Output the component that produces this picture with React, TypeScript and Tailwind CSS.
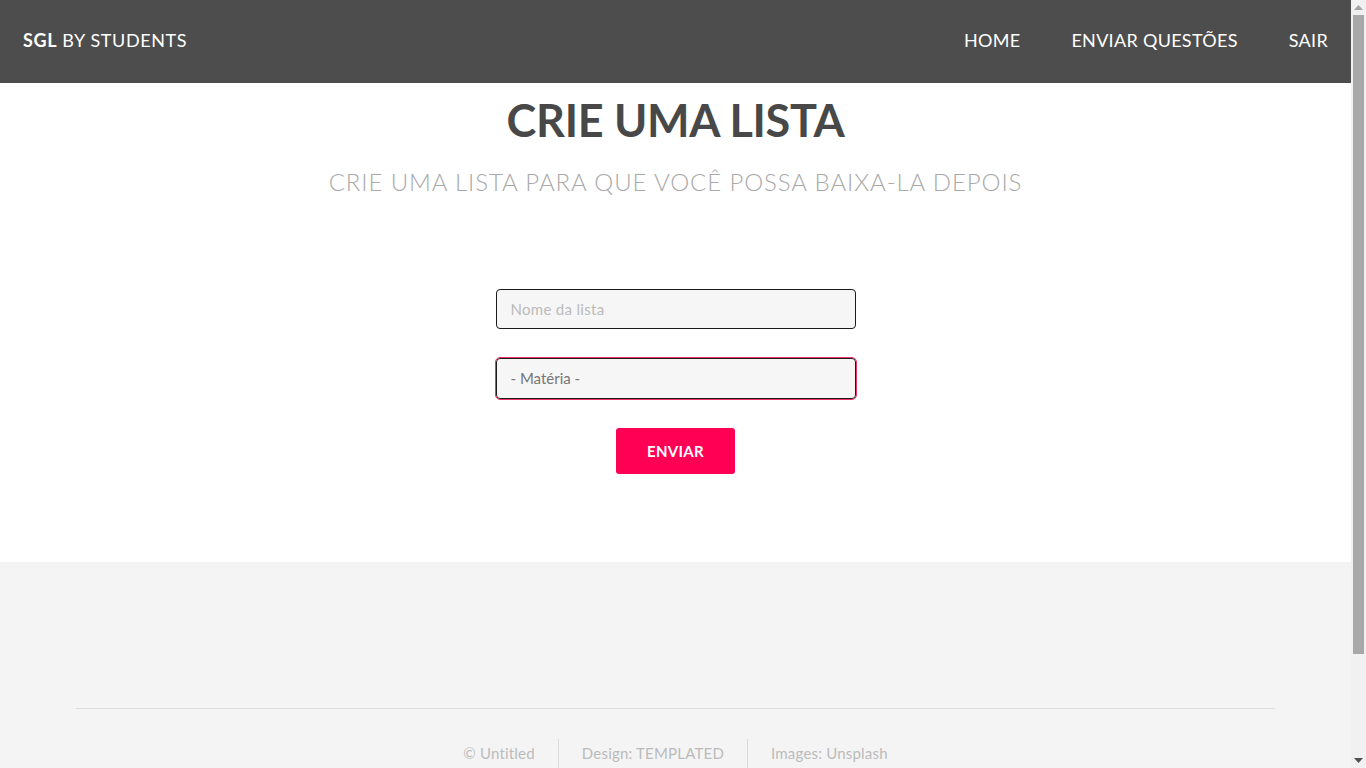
const navLinks = ["HOME", "ENVIAR QUESTÕES", "SAIR"];

// static picture of the browser scrollbar seen in the screenshot
const ScrollbarStrip = () => (
  <div className="w-[15px] shrink-0 bg-[#f1f1f1] flex flex-col items-center">
    <div className="h-[15px] flex items-center justify-center">
      <svg width="9" height="5" viewBox="0 0 9 5">
        <path d="M0 5 L4.5 0 L9 5 Z" fill="#a3a3a3" />
      </svg>
    </div>
    <div className="w-[11px] h-[639px] bg-[#a8a8a8]"></div>
    <div className="flex-1"></div>
    <div className="h-[15px] flex items-center justify-center">
      <svg width="9" height="5" viewBox="0 0 9 5">
        <path d="M0 0 L9 0 L4.5 5 Z" fill="#505050" />
      </svg>
    </div>
  </div>
);

const App = () => {
  return (
    <div
      className="h-[768px] flex overflow-hidden text-[#555]"
      style={{ fontFamily: "Lato, 'Open Sans', sans-serif" }}
    >
      <div className="flex-1 min-h-[887px] bg-[#f4f4f4]">
        <header className="h-[83px] bg-[#4d4d4d] flex items-center justify-between px-[23px] pb-[3px] text-white text-[18px] tracking-[0.3px]">
          <div className="tracking-[0.6px]">
            <span className="font-bold">SGL</span> BY STUDENTS
          </div>
          <nav className="flex gap-[51px]">
            {navLinks.map((l) => (
              <a key={l} href="#" className="text-white">
                {l}
              </a>
            ))}
          </nav>
        </header>

        <section className="bg-white h-[479px] flex flex-col items-center">
          <h1 className="mt-[12px] text-[45px] leading-[50px] font-bold text-[#484848] tracking-[-0.3px]">
            CRIE UMA LISTA
          </h1>
          <p className="mt-[22px] text-[24px] leading-[30px] font-light text-[#a9a9a9] tracking-[0.9px]">
            CRIE UMA LISTA PARA QUE VOCÊ POSSA BAIXA-LA DEPOIS
          </p>

          <form className="mt-[92px] w-[360px] flex flex-col items-center">
            <input
              type="text"
              placeholder="Nome da lista"
              className="w-full h-[40px] px-[14px] bg-[#f6f6f6] border border-[#1a1a1a] rounded-[4px] text-[15px] tracking-[0.3px] placeholder:text-[#bbb] outline-none"
            />
            <div className="mt-[29px] w-full h-[41px] px-[14px] flex items-center bg-[#f6f6f6] border border-[#1a1a1a] rounded-[4px] outline outline-1 outline-[#f0336b] text-[15px] text-[#777]">
              - Matéria -
            </div>
            <button
              type="button"
              className="mt-[29px] w-[119px] h-[46px] bg-[#ff0055] rounded-[3px] text-white text-[15px] font-bold tracking-[0.3px]"
            >
              ENVIAR
            </button>
          </form>
        </section>

        <footer className="px-[76px] pt-[146px]">
          <div className="border-t border-[#dcdcdc]"></div>
          <div className="flex justify-center mt-[30px] text-[15px] text-[#bbb] tracking-[0.2px]">
            <span className="px-[23px] pt-[3px] pb-[20px]">© Untitled</span>
            <span className="px-[23px] pt-[3px] pb-[20px] border-l border-[#dcdcdc]">
              Design: TEMPLATED
            </span>
            <span className="px-[23px] pt-[3px] pb-[20px] border-l border-[#dcdcdc]">
              Images: Unsplash
            </span>
          </div>
        </footer>
      </div>
      <ScrollbarStrip />
    </div>
  );
};

export default App;
